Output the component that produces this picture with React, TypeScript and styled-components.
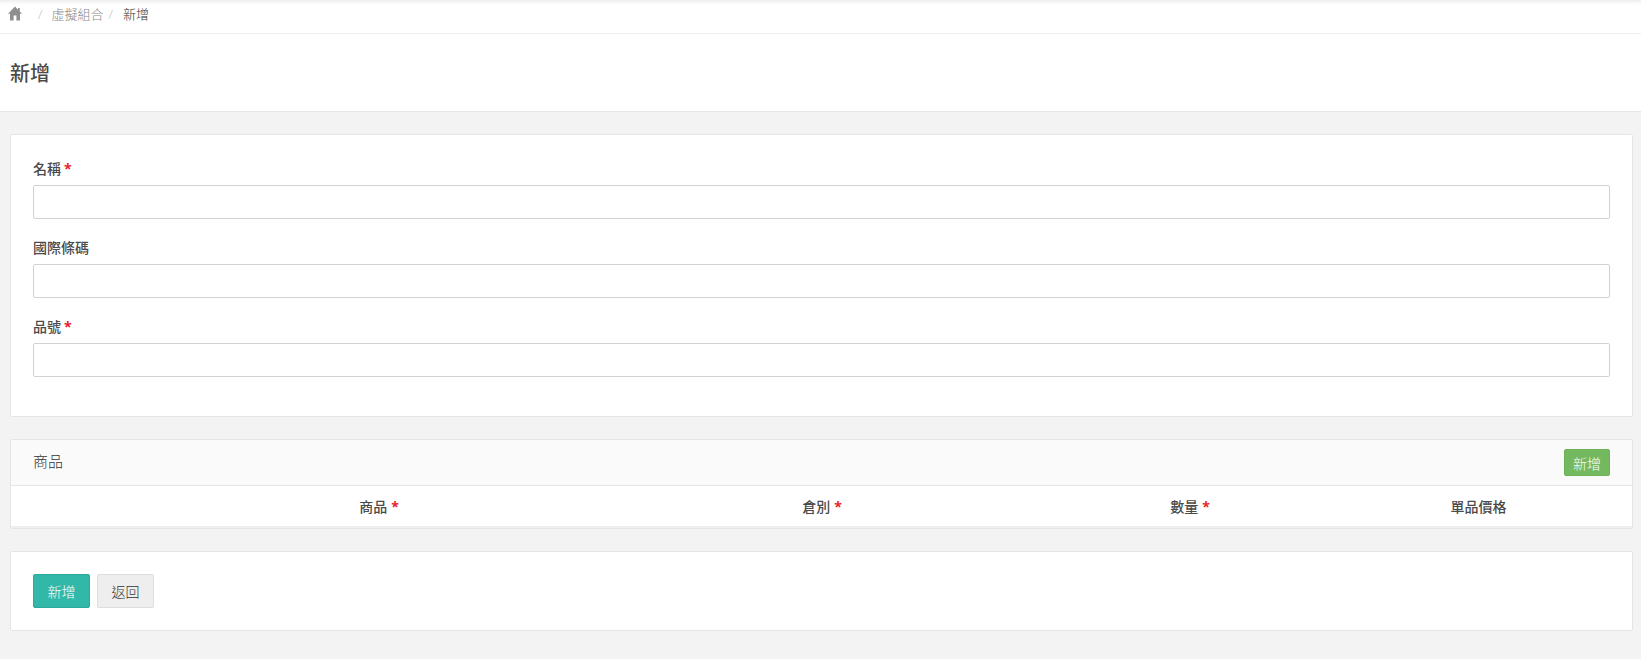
import React from 'react';
import styled, { createGlobalStyle } from 'styled-components';

const GlobalStyle = createGlobalStyle`
  html, body {
    margin: 0;
    padding: 0;
    background: #f3f3f3;
    color: #333;
    font-family: "Open Sans", "Noto Sans CJK TC", sans-serif;
    font-size: 14px;
  }
`;

const Page = styled.div`
  width: 1641px;
  height: 659px;
  overflow: hidden;
  background: #f3f3f3;
`;

const Breadcrumb = styled.nav`
  display: flex;
  align-items: center;
  height: 34px;
  padding: 0 0 6px 8px;
  box-sizing: border-box;
  background: #fff;
  border-bottom: 1px solid #eee;
  box-shadow: inset 0 5px 5px -4px rgba(0, 0, 0, 0.1);
  font-size: 13px;
  font-weight: 300;
`;

const Crumb = styled.span<{ $active?: boolean }>`
  color: ${({ $active }) => ($active ? '#333' : '#888')};
`;

const Slash = styled.span<{ $wide?: boolean }>`
  color: #bbb;
  margin: ${({ $wide }) => ($wide ? '0 9px 0 16px' : '0 10px 0 5px')};
`;

const HomeIcon = styled.svg`
  width: 14px;
  height: 15px;
  fill: #8f8f8f;
  display: block;
`;

const TitleBar = styled.header`
  display: flex;
  align-items: center;
  height: 78px;
  padding-left: 10px;
  box-sizing: border-box;
  background: #fff;
  border-bottom: 1px solid #e7e7e7;
`;

const Title = styled.h1`
  margin: 0;
  font-size: 20px;
  font-weight: 500;
  color: #4a4a4a;
`;

const Content = styled.main`
  display: flex;
  flex-direction: column;
  gap: 22px;
  padding: 22px 8px 0 10px;
`;

const Card = styled.section`
  background: #fff;
  border: 1px solid #e5e5e5;
  border-radius: 2px;
`;

const FormCard = styled(Card)`
  display: flex;
  flex-direction: column;
  gap: 15px;
  height: 283px;
  box-sizing: border-box;
  padding: 20px 22px 0;
`;

const Field = styled.div`
  display: flex;
  flex-direction: column;
  gap: 4px;
`;

const Label = styled.label`
  padding-top: 2px;
  font-size: 14px;
  line-height: 24px;
  font-weight: 500;
  color: #4a4a4a;
`;

const Required = styled.span<{ $tight?: boolean }>`
  color: #e8222c;
  font-weight: 700;
  margin-left: ${({ $tight }) => ($tight ? '4px' : '3px')};
`;

const Input = styled.input`
  height: 34px;
  box-sizing: border-box;
  border: 1px solid #d2d2d2;
  border-radius: 2px;
  background: #fff;
  outline: none;
`;

const PanelHeader = styled.div`
  display: flex;
  align-items: center;
  justify-content: space-between;
  height: 46px;
  box-sizing: border-box;
  padding: 0 22px;
  background: #fafafa;
  border-bottom: 1px solid #e5e5e5;
`;

const PanelTitle = styled.h2`
  margin: 0 0 5px;
  font-size: 15px;
  font-weight: 300;
  color: #333;
`;

const SmallButton = styled.button`
  width: 46px;
  height: 27px;
  padding: 0;
  border: 1px solid #6eb258;
  border-radius: 2px;
  background: #74b95f;
  color: #fff;
  font: inherit;
  font-size: 14px;
  font-weight: 300;
`;

const TableHead = styled.div`
  display: grid;
  grid-template-columns: 158px 420px 466px 270px 1fr;
  align-items: center;
  height: 42px;
  box-sizing: border-box;
  border-bottom: 2px solid #eee;
`;

const Th = styled.div`
  text-align: center;
  font-size: 14px;
  font-weight: 500;
  color: #4a4a4a;
`;

const ActionCard = styled(Card)`
  display: flex;
  gap: 7px;
  height: 80px;
  box-sizing: border-box;
  padding: 22px 22px 0;
`;

const Button = styled.button<{ $primary?: boolean }>`
  width: 57px;
  height: 34px;
  padding: 0;
  border-radius: 2px;
  border: 1px solid ${({ $primary }) => ($primary ? '#2ba99b' : '#ddd')};
  background: ${({ $primary }) => ($primary ? '#32b8a9' : '#eee')};
  color: ${({ $primary }) => ($primary ? '#fff' : '#333')};
  font: inherit;
  font-size: 14px;
  font-weight: 300;
`;

const RequiredTh = ({ children }: { children: React.ReactNode }) => (
  <Th>
    {children}
    <Required $tight>*</Required>
  </Th>
);

export default function App() {
  return (
    <Page>
      <GlobalStyle />
      <Breadcrumb>
        <HomeIcon viewBox="0 0 14 15">
          <path d="M7 .6 0 7.8h2v6.8h3.6V9.6h2.8v5H12V7.8h2l-2.2-2.3V2H10v1.7z" />
        </HomeIcon>
        <Slash $wide>/</Slash>
        <Crumb>虛擬組合</Crumb>
        <Slash>/</Slash>
        <Crumb $active>新增</Crumb>
      </Breadcrumb>
      <TitleBar>
        <Title>新增</Title>
      </TitleBar>
      <Content>
        <FormCard>
          <Field>
            <Label>名稱<Required>*</Required></Label>
            <Input />
          </Field>
          <Field>
            <Label>國際條碼</Label>
            <Input />
          </Field>
          <Field>
            <Label>品號<Required>*</Required></Label>
            <Input />
          </Field>
        </FormCard>
        <Card>
          <PanelHeader>
            <PanelTitle>商品</PanelTitle>
            <SmallButton>新增</SmallButton>
          </PanelHeader>
          <TableHead>
            <div />
            <RequiredTh>商品</RequiredTh>
            <RequiredTh>倉別</RequiredTh>
            <RequiredTh>數量</RequiredTh>
            <Th>單品價格</Th>
          </TableHead>
        </Card>
        <ActionCard>
          <Button $primary>新增</Button>
          <Button>返回</Button>
        </ActionCard>
      </Content>
    </Page>
  );
}
